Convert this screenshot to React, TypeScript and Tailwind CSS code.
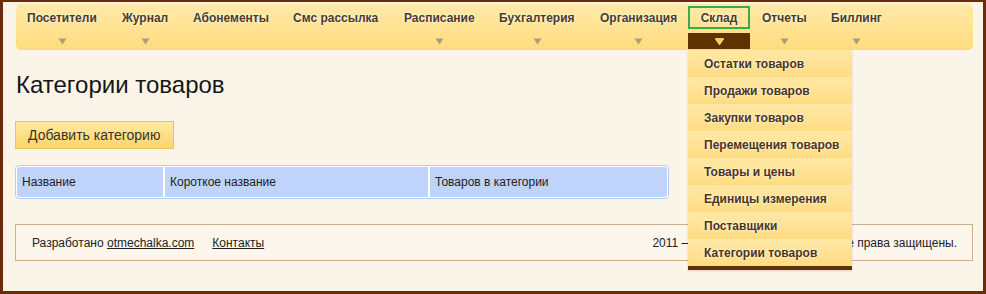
import { Fragment } from 'react'

const MENU = [
  { label: 'Посетители', w: 95, arrow: true },
  { label: 'Журнал', w: 71, arrow: true },
  { label: 'Абонементы', w: 100, arrow: false },
  { label: 'Смс рассылка', w: 111, arrow: false },
  { label: 'Расписание', w: 95, arrow: true },
  { label: 'Бухгалтерия', w: 101, arrow: true },
  { label: 'Организация', w: 100, arrow: true },
  { label: 'Склад', w: 62, arrow: true, active: true },
  { label: 'Отчеты', w: 69, arrow: true },
  { label: 'Биллинг', w: 75, arrow: true },
]

const SUBMENU = [
  'Остатки товаров',
  'Продажи товаров',
  'Закупки товаров',
  'Перемещения товаров',
  'Товары и цены',
  'Единицы измерения',
  'Поставщики',
  'Категории товаров',
]

function Arrow({ active }: { active?: boolean }) {
  return (
    <svg width="9" height="7" viewBox="0 0 9 7">
      {active ? (
        <path d="M0 0.5 L9 0.5 L4.5 7 Z" fill="#ffd13a" stroke="#fff3b0" strokeWidth="0.6" />
      ) : (
        <path d="M0.5 0.5 L8.5 0.5 L4.5 6.5 Z" fill="#ab9d82" />
      )}
    </svg>
  )
}

export default function App() {
  return (
    <div
      className="relative w-[986px] h-[294px] overflow-hidden border-l-[3px] border-r-[3px] border-t-[2px] border-b-[3px] border-[#6b2a08] bg-[#fbf4e9] pl-[13px] pr-[10px] pt-[2px] text-[#222]"
      style={{ fontFamily: '"Liberation Sans", Arial, sans-serif' }}
    >
      <nav className="flex h-[46px] rounded-[5px] bg-gradient-to-b from-[#ffeaa8] to-[#ffdb7c]">
        {MENU.map((m, i) => (
          <div
            key={m.label}
            className={`flex shrink-0 flex-col ${i === 0 ? 'ml-[-1px]' : ''}`}
            style={{ width: m.w }}
          >
            <div
              className={`mt-[2px] flex h-[23px] items-center whitespace-nowrap text-[12px] font-bold text-[#4b3b2a] [text-shadow:0_0_3px_#fff] ${
                m.active ? 'justify-center border-2 border-[#35ad4a]' : 'pl-[12px]'
              }`}
            >
              {m.label}
            </div>
            <div
              className={`mt-[4px] flex h-[16px] items-center ${m.active ? 'justify-center bg-[#5e3300]' : 'pl-[12px]'}`}
            >
              {m.arrow && !m.active && (
                <div className="flex justify-center" style={{ width: m.w - 24 }}>
                  <Arrow />
                </div>
              )}
              {m.active && <Arrow active />}
            </div>
          </div>
        ))}
      </nav>

      <div className="absolute left-[685px] top-[48px] z-10 w-[164px] shadow-[0_1px_2px_rgba(0,0,0,0.15)]">
        {SUBMENU.map((s) => (
          <Fragment key={s}>
            <div className="flex h-[27px] items-center bg-gradient-to-b from-[#ffe8a6] to-[#ffdc82] pl-[16px] text-[12px] font-bold text-[#4b3522] [text-shadow:0_0_3px_#fff]">
              {s}
            </div>
          </Fragment>
        ))}
        <div className="h-[4px] bg-[#5e3300]" />
      </div>

      <h1 className="mt-[21px] text-[24px] leading-[28px] text-[#161616]">Категории товаров</h1>

      <button className="mt-[22px] ml-[-1px] flex h-[28px] w-[159px] items-center border border-[#e6c36a] bg-gradient-to-b from-[#ffeaa2] to-[#fcd46a] pl-[12px] text-[14px] text-[#3a3328]">
        Добавить категорию
      </button>

      <div className="mt-[16px] ml-[-1px] flex h-[34px] w-[654px] gap-[2px] rounded-[4px] border border-[#b3cbf5] bg-white p-px text-[12px] text-[#222]">
        <div className="flex w-[146px] items-center rounded-l-[3px] bg-[#bfd3fb] pl-[5px]">Название</div>
        <div className="flex w-[263px] items-center bg-[#bfd3fb] pl-[5px]">Короткое название</div>
        <div className="flex flex-1 items-center rounded-r-[3px] bg-[#bfd3fb] pl-[5px]">Товаров в категории</div>
      </div>

      <footer className="mt-[25px] ml-[-1px] flex h-[37px] items-center justify-between border border-[#cdb18c] bg-[#fcf6ec] pl-[16px] pr-[15px] text-[12px] text-[#222]">
        <div className="flex gap-[18px]">
          <span>
            Разработано <span className="underline">otmechalka.com</span>
          </span>
          <span className="underline">Контакты</span>
        </div>
        <span>2011 — 2015 © otmechalka.com. Все права защищены.</span>
      </footer>
    </div>
  )
}
